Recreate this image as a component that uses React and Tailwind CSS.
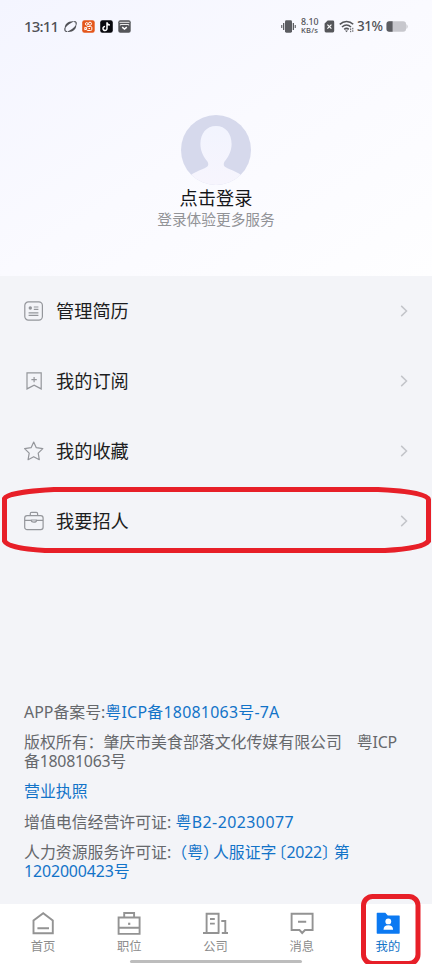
const menuItems = [
  { id: 'resume', label: '管理简历', icon: ResumeIcon },
  { id: 'subscribe', label: '我的订阅', icon: BookmarkIcon },
  { id: 'favorite', label: '我的收藏', icon: StarIcon },
  { id: 'recruit', label: '我要招人', icon: BriefcaseIcon },
];

const tabs = [
  { id: 'home', label: '首页', icon: HomeTabIcon },
  { id: 'jobs', label: '职位', icon: JobTabIcon },
  { id: 'company', label: '公司', icon: CompanyTabIcon },
  { id: 'message', label: '消息', icon: MessageTabIcon },
  { id: 'mine', label: '我的', icon: MineTabIcon, active: true },
];

function ResumeIcon() {
  return (
    <svg width="20" height="20" viewBox="0 0 20 20" fill="none" stroke="#94969b" strokeWidth="1.2">
      <rect x="0.8" y="0.9" width="17.6" height="18.2" rx="3.6" />
      <circle cx="6.3" cy="7" r="1.7" fill="#94969b" stroke="none" />
      <path d="M9.8 6h4.6M9.8 8.4h4.6M4.6 11.8h9.8M4.6 14.3h9.8" />
    </svg>
  );
}

function BookmarkIcon() {
  return (
    <svg width="20" height="20" viewBox="0 0 20 20" fill="none" stroke="#94969b" strokeWidth="1.2">
      <path d="M3 1.9h14.2v16l-7.1-3.8L3 17.9z" />
      <path d="M10.1 5.9v5.4M7.4 8.6h5.4" />
    </svg>
  );
}

function StarIcon() {
  return (
    <svg width="20" height="20" viewBox="0 0 20 20" fill="none" stroke="#94969b" strokeWidth="1.2" strokeLinejoin="round">
      <path d="M9.7 1l2.6 5.700 6.500.9-4.600 4.500 1.100 6.600-5.600-3-5.600 3 1.100-6.600L.6 7.600l6.500-.9z" />
    </svg>
  );
}

function BriefcaseIcon() {
  return (
    <svg width="20" height="20" viewBox="0 0 20 20" fill="none" stroke="#94969b" strokeWidth="1.2">
      <rect x=".7" y="4.6" width="18.4" height="14" rx="2.4" />
      <path d="M6.3 4.5V2.6q0-1.3 1.3-1.3h4.700q1.300 0 1.300 1.300v1.900M.8 9.400h6.600M12.400 9.400h6.600M7.400 9h5v.8q0 1.400-2.500 1.400t-2.500-1.400z" />
    </svg>
  );
}

function ChevronIcon() {
  return (
    <svg width="8" height="12" viewBox="0 0 8 12" fill="none" stroke="#c3c5ca" strokeWidth="1.5">
      <path d="M1.2.9L6.5 6l-5.3 5.1" />
    </svg>
  );
}

function HomeTabIcon() {
  return (
    <svg width="24" height="24" viewBox="0 0 24 24" fill="none" stroke="#939393" strokeWidth="1.9">
      <path d="M2.500 22.300V9.500L12.200 2.200l9.600 7.300v12.800zM6.400 17.300h11.600" />
    </svg>
  );
}

function JobTabIcon() {
  return (
    <svg width="24" height="24" viewBox="0 0 24 24" fill="none" stroke="#939393" strokeWidth="1.9">
      <path d="M1.600 6.500h21v16.400h-21zM7.200 6.500V2h9.900v4.500M1.600 16.800h21" />
      <path d="M11.100 12.800h2.200" strokeWidth="2.2" />
    </svg>
  );
}

function CompanyTabIcon() {
  return (
    <svg width="25" height="24" viewBox="0 0 25 24" fill="none" stroke="#939393" strokeWidth="1.9">
      <path d="M0 22h16.400M3.600 22V2.800h12v19.200M18.300 10h4v12M18.800 22h6.200M7 8h4.800M7 12.600h4.800" />
    </svg>
  );
}

function MessageTabIcon() {
  return (
    <svg width="24" height="24" viewBox="0 0 24 24" fill="none" stroke="#939393" strokeWidth="1.9">
      <path d="M1.600 2.800h21v16.200h-7.600L12.200 22l-2.700-3h-7.900zM8 10.800h8.200" />
    </svg>
  );
}

function MineTabIcon() {
  return (
    <svg width="24" height="24" viewBox="0 0 24 24">
      <path d="M1.300 1.800h8l2.500 2.600h11.300a.6.6 0 0 1 .6.6v17.100a.6.6 0 0 1-.6.6H1.300a.6.6 0 0 1-.6-.6V2.400a.6.6 0 0 1 .6-.6z" fill="#0b79f2" />
      <circle cx="12.300" cy="10.400" r="2.900" fill="#fff" />
      <path d="M7.500 18.700c0-3.200 1.900-4.500 4.800-4.500s4.800 1.300 4.800 4.500z" fill="#fff" />
    </svg>
  );
}

function StatusBar() {
  return (
    <div className="flex h-[52px] items-center justify-between px-6 text-[#505156]">
      <div className="flex items-center">
        <span className="w-[35px] whitespace-nowrap text-[15px] font-medium leading-5 tracking-[-0.8px]">13:11</span>
        <svg className="ml-[5px]" width="13" height="13" viewBox="0 0 13 13">
          <path d="M.8 8.800C.2 4 4.500.4 10.600 1.300 7 2.800 3.500 4.800.8 8.800z" fill="#505156" />
          <path d="M12.300 4.200c.5 5-3.800 8.500-9.500 7.600C6.500 10.300 9.900 8.200 12.300 4.200z" fill="#505156" />
          <path d="M1.100 8.200C.5 10.500 1.200 11.600 3 11.500M10.200 1.600c1.700-.1 2.300 1 1.800 3" fill="none" stroke="#505156" strokeWidth="1.200" />
        </svg>
        <svg className="ml-[5px]" width="13" height="13" viewBox="0 0 13 13">
          <rect width="12.500" height="12.500" x=".2" y=".2" rx="2.200" fill="#e4561b" />
          <g fill="none" stroke="#fff" strokeWidth="1">
            <circle cx="4.700" cy="3.900" r="1.300" />
            <circle cx="8" cy="3.700" r="1.500" />
            <rect x="4.600" y="6.500" width="5.200" height="4" rx="1.100" />
            <path d="M4.400 8.200L2.800 7.300v2.600l1.600-.8M6.500 8.500h1.500" />
          </g>
        </svg>
        <svg className="ml-[5px]" width="13" height="13" viewBox="0 0 13 13">
          <rect width="12.600" height="12.600" x=".2" y=".2" rx="2.200" fill="#08080e" />
          <path d="M7 2.300v6.200a2 2 0 1 1-1.900-2M7 2.300c.3 1.800 1.300 2.500 2.900 2.700" fill="none" stroke="#fff" strokeWidth="1.500" />
        </svg>
        <svg className="ml-[5px]" width="13" height="13" viewBox="0 0 13 13">
          <rect x=".3" y=".3" width="12.400" height="12.400" rx="2" fill="#55565a" />
          <path d="M1.500 2.300h10M2.300 5.500v-1h8.400v1" fill="none" stroke="#fff" strokeWidth=".9" />
          <path d="M4.200 7.200L6.500 9l2.300-1.800" fill="none" stroke="#fff" strokeWidth="1.500" />
        </svg>
      </div>

      <div className="flex items-center">
        <svg width="15" height="13" viewBox="0 0 15 13" fill="#5b5c61">
          <rect x="4" y=".3" width="7" height="12.400" rx="1.400" />
          <path d="M2 3h1.300v7H2zM.2 5h1.100v3H.2zM11.700 3H13v7h-1.300zM13.700 5h1.100v3h-1.100z" />
        </svg>
        <div className="ml-[5px] flex w-[19px] flex-col whitespace-nowrap text-[8.800px] font-medium leading-[8px]">
          <span>8.10</span>
          <span className="text-[7.600px] tracking-[0.2px]">KB/s</span>
        </div>
        <svg className="ml-[4px]" width="11" height="13" viewBox="0 0 11 13">
          <path d="M3.700.5h5.100q1.400 0 1.400 1.400v9.100q0 1.400-1.400 1.400H2Q.6 12.400.6 11V3.600z" fill="#55565a" />
          <path d="M3.400 4.700l4 4M7.400 4.700l-4 4" stroke="#fff" strokeWidth="1.200" />
        </svg>
        <svg className="ml-[4px]" width="16" height="13" viewBox="0 0 16 13" fill="none" stroke="#55565a" strokeWidth="1.600">
          <path d="M.8 4.300c4-3.700 9.600-3.700 13.400 0M3 7c2.700-2.400 6.300-2.400 9 0M5.200 9.400c1.400-1.200 3.300-1.200 4.600 0" />
          <path d="M6 10.500h3L7.500 12.300z" fill="#55565a" stroke="none" />
          <path d="M11.700 8.400v3.800M13.800 7.800v4" strokeWidth="1" strokeDasharray="1.600 .8" />
        </svg>
        <span className="ml-[2px] w-[26px] whitespace-nowrap text-[13.500px] font-medium leading-5 tracking-[-0.500px]">31%</span>
        <svg className="ml-[3px]" width="22" height="11" viewBox="0 0 22 11">
          <rect x=".5" y=".2" width="19.500" height="10.600" rx="2.800" fill="#c7c7cd" />
          <path d="M6.600.2v10.600H3.300A2.800 2.800 0 0 1 .5 8V3A2.800 2.800 0 0 1 3.300.2z" fill="#5b5c61" />
          <path d="M20.400 3q1.300 1 1.300 2.500T20.400 8z" fill="#c7c7cd" />
        </svg>
      </div>
    </div>
  );
}

function Avatar() {
  return (
    <svg width="70" height="70" viewBox="0 0 70 70">
      <defs>
        <linearGradient id="body" x1="0" y1="0" x2="0" y2="1">
          <stop offset="0" stopColor="#f2f4fe" />
          <stop offset="1" stopColor="#f7f5fd" />
        </linearGradient>
        <clipPath id="round">
          <circle cx="35" cy="35" r="35" />
        </clipPath>
      </defs>
      <g clipPath="url(#round)">
        <rect width="70" height="70" fill="#d6d9ec" />
        <path
          d="M35 11c-9.600 0-15.600 7.500-15.600 18 0 6.200 2.500 12 6 16.200 2.600 3 2.400 5.500-.2 7.100C21 55 15.500 56 10 60v12h50V60c-5.500-4-11-5-15.200-7.700-2.600-1.600-2.800-4.100-.2-7.100 3.500-4.200 6-10 6-16.200C50.600 18.500 44.600 11 35 11z"
          fill="url(#body)"
        />
      </g>
    </svg>
  );
}

function MenuRow({ label, icon: Icon }) {
  return (
    <button className="flex h-[69.800px] w-full items-center px-6">
      <Icon />
      <span className="ml-3 text-[18.200px] leading-6 text-[#1c1d20]">{label}</span>
      <span className="ml-auto">
        <ChevronIcon />
      </span>
    </button>
  );
}

function Footer() {
  return (
    <div className="flex flex-col gap-[11.300px] whitespace-nowrap px-6 text-[15.900px] leading-[19px] text-[#66686c]">
      <p>
        <span>APP备案号:</span>
        <a className="tracking-[0.260px] text-[#1273c8]">粤ICP备18081063号-7A</a>
      </p>
      <p>
        版权所有：肇庆市美食部落文化传媒有限公司
        <span className="ml-[15px] tracking-[-0.200px]">粤ICP</span>
        <br />
        <span className="tracking-[-0.250px]">备18081063号</span>
      </p>
      <p>
        <a className="text-[#1273c8]">营业执照</a>
      </p>
      <p>
        增值电信经营许可证: <a className="tracking-[0.460px] text-[#1273c8]">粤B2-20230077</a>
      </p>
      <p>
        人力资源服务许可证:
        <a className="text-[#1273c8]">
          （粤）
          <span className="-ml-[6px]">人服证字</span>
          <span className="-ml-[6px]">〔</span>
          <span className="tracking-[-0.200px]">2022</span>
          <span>〕</span>
          <span className="-ml-[4px]">第</span>
          <br />
          <span className="tracking-[-0.120px]">1202000423号</span>
        </a>
      </p>
    </div>
  );
}

function TabBar() {
  return (
    <nav className="flex h-[60px] bg-white pr-px pt-[7px]">
      {tabs.map(({ id, label, icon: Icon, active }) => (
        <button key={id} className="flex flex-1 flex-col items-center">
          <Icon />
          <span className={`mt-[4px] text-[12.300px] leading-4 ${active ? 'text-[#1273c8]' : 'text-[#8c8c8c]'}`}>
            {label}
          </span>
        </button>
      ))}
    </nav>
  );
}

export default function App() {
  return (
    <div className="relative flex h-[964px] w-[432px] flex-col overflow-hidden bg-[#f3f4f8] font-['Noto_Sans','Noto_Sans_CJK_SC',sans-serif]">
      <header className="h-[276px] bg-linear-to-br from-[#f4f5ff] via-[#fafaff] to-[#fefeff]">
        <StatusBar />
        <div className="flex flex-col items-center pt-[63px]">
          <Avatar />
          <h1 className="mt-px text-[18.200px] leading-6 text-[#151619]">点击登录</h1>
          <p className="-mt-px text-[14.700px] leading-5 text-[#929397]">登录体验更多服务</p>
        </div>
      </header>

      <main className="flex flex-1 flex-col pt-[0.600px]">
        {menuItems.map((item) => (
          <MenuRow key={item.id} label={item.label} icon={item.icon} />
        ))}
        <div className="mt-auto pb-[23px]">
          <Footer />
        </div>
      </main>

      <TabBar />

      <div className="absolute left-[130px] top-[960px] h-[3px] w-[172px] rounded-full bg-[#bdbdbd]" />

      <svg className="pointer-events-none absolute left-0 top-0" width="432" height="964" fill="none" stroke="#e71f28" strokeWidth="5">
        <path d="M54 489.500H378C402 490.500 427 493.500 428.500 499.500V541C424 547.500 403 549.500 385 550.500H45C25 549.500 7 546.500 4.500 541V498.500C7 493.500 33 490.500 54 489.500z" />
        <rect x="363.500" y="896.500" width="54.500" height="67" rx="9" />
      </svg>
    </div>
  );
}
